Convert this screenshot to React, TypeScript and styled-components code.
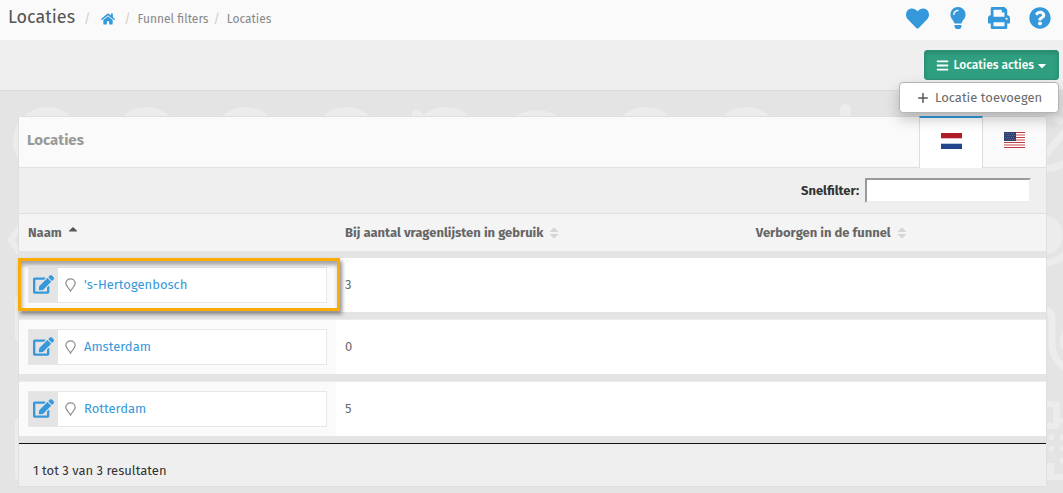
import React from "react";
import styled, { createGlobalStyle, css } from "styled-components";
import {
  FaBars,
  FaCaretDown,
  FaEdit,
  FaHeart,
  FaHome,
  FaLightbulb,
  FaPrint,
  FaQuestionCircle,
} from "react-icons/fa";

const blue = "#3498db";

const GlobalStyle = createGlobalStyle`
  * { box-sizing: border-box; }
  body {
    margin: 0;
    background: #e4e4e4;
    color: #676a6c;
    font: 13px/20px "Fira Sans", Roboto, "Noto Sans", sans-serif;
  }
  button, input { font: inherit; }
  a { color: ${blue}; text-decoration: none; }
  svg { display: block; flex: none; }
`;

const Page = styled.div`
  position: relative;
  min-height: 100vh;
  overflow: hidden;
`;

const Backdrop = styled.svg`
  position: absolute;
  top: 91px;
  left: 0;
  z-index: -1;
`;

const Header = styled.header`
  display: flex;
  align-items: center;
  justify-content: space-between;
  height: 40px;
  padding: 0 12px 4px 8px;
  background: #fafafa;
`;

const Trail = styled.nav`
  display: flex;
  align-items: center;
`;

const Title = styled.h1`
  margin: 0 4px 2px 0;
  font-size: 18px;
  font-weight: 400;
  line-height: 24px;
  color: #555;
`;

const Crumbs = styled.ol`
  display: flex;
  align-items: center;
  margin: 0;
  padding: 2px 0 0;
  list-style: none;
  font-size: 12px;
`;

const Crumb = styled.li`
  display: flex;
  align-items: center;
  &::before {
    content: "/";
    padding: 0 7px 0 5px;
    color: #ccc;
  }
`;

const CrumbLink = styled.a`
  color: #888;
`;

const HomeLink = styled.a`
  padding: 0 4px;
`;

const Tools = styled.div`
  display: flex;
  align-items: center;
  gap: 19px;
`;

const ToolButton = styled.button`
  display: flex;
  justify-content: center;
  width: 22px;
  padding: 0;
  border: 0;
  background: none;
  color: ${blue};
  cursor: pointer;
`;

const Toolbar = styled.div`
  display: flex;
  justify-content: flex-end;
  padding: 10px 4px;
  border-bottom: 1px solid #dcdcdc;
  background: #efefef;
`;

const Dropdown = styled.div`
  position: relative;
`;

const ActionButton = styled.button`
  display: flex;
  align-items: center;
  gap: 4px;
  height: 30px;
  padding: 0 12px 0 11px;
  border: 1px solid #2b9278;
  border-radius: 3px;
  background: #2f9f80;
  box-shadow: inset 0 2px 4px rgba(0, 0, 0, 0.15);
  color: #fff;
  font-size: 12px;
  font-weight: 500;
  white-space: nowrap;
  cursor: pointer;
  & > svg:last-child {
    width: 8px;
    height: 13px;
  }
`;

const Menu = styled.ul`
  position: absolute;
  top: 32px;
  right: 0;
  z-index: 2;
  width: 160px;
  margin: 0;
  padding: 0;
  border: 1px solid #b4b4b4;
  border-radius: 4px;
  background: #fff;
  box-shadow: 0 6px 14px rgba(0, 0, 0, 0.22);
  list-style: none;
`;

const MenuLink = styled.a`
  display: flex;
  align-items: center;
  gap: 7px;
  height: 29px;
  padding-left: 18px;
  color: #6a6a6a;
  white-space: nowrap;
`;

const Panel = styled.main`
  margin: 25px 16px 7px 18px;
  border: 1px solid #dfdfdf;
  border-radius: 3px 3px 0 0;
  background: #efefef;
`;

const PanelHead = styled.div`
  display: flex;
  justify-content: space-between;
  height: 51px;
  border-bottom: 1px solid #e0e0e0;
  background: #fafafa;
`;

const PanelTitle = styled.h2`
  margin: 0;
  padding: 13px 8px;
  font-size: 15px;
  font-weight: 700;
  line-height: 20px;
  color: #999;
`;

const Tabs = styled.div`
  display: flex;
  margin-top: -1px;
`;

const Tab = styled.button<{ $active?: boolean }>`
  display: flex;
  align-items: center;
  justify-content: center;
  width: ${(p) => (p.$active ? "64px" : "63px")};
  height: 52px;
  padding: 0 0 4px;
  border: 0;
  background: none;
  cursor: pointer;
  ${(p) =>
    p.$active &&
    css`
      border: 1px solid #ddd;
      border-width: 2px 1px 0;
      border-top-color: ${blue};
      background: #fff;
    `}
`;

const FilterBar = styled.div`
  display: flex;
  align-items: center;
  justify-content: flex-end;
  gap: 6px;
  height: 46px;
  padding-right: 15px;
  border-bottom: 1px solid #dfdfdf;
`;

const FilterLabel = styled.label`
  font-weight: 700;
  color: #333;
`;

const FilterInput = styled.input`
  width: 166px;
  height: 25px;
  padding: 1px 4px;
  border: 2px solid;
  border-color: #9a9a9a #eee #eee #9a9a9a;
  background: #fff;
`;

const Table = styled.table`
  width: 100%;
  table-layout: fixed;
  border-spacing: 0;
`;

const Th = styled.th<{ $width?: string }>`
  width: ${(p) => p.$width ?? "auto"};
  height: 44px;
  padding: 0 9px;
  border-bottom: 7px solid #e4e4e4;
  background: #f4f4f4;
  color: #666;
  font-weight: 700;
  text-align: left;
`;

const SortButton = styled.button`
  display: flex;
  align-items: center;
  gap: 7px;
  padding: 0;
  border: 0;
  background: none;
  color: inherit;
  white-space: nowrap;
  cursor: pointer;
`;

const Row = styled.tr`
  &:not(:first-child) > td {
    border-top: 1px solid #ececec;
  }
`;

const Td = styled.td`
  padding: 9px;
  border-bottom: 7px solid #e4e4e4;
  background: #fff;
`;

const NameTd = styled(Td)<{ $marked?: boolean }>`
  position: relative;
  background: #fafafa;
  ${(p) =>
    p.$marked &&
    css`
      &::after {
        content: "";
        position: absolute;
        inset: 0 -4px 1px -1px;
        z-index: 1;
        border: 3px solid #f9ab06;
        box-shadow: 2px 3px 4px rgba(0, 0, 0, 0.45),
          inset 1px 4px 4px rgba(0, 0, 0, 0.35);
        pointer-events: none;
      }
    `}
`;

const NameBox = styled.div`
  display: flex;
  align-items: center;
  height: 36px;
  border: 1px solid #e7e7e7;
  background: #fff;
`;

const EditLink = styled.a`
  display: flex;
  align-items: center;
  justify-content: center;
  align-self: stretch;
  width: 29px;
  margin-right: 7px;
  padding: 0 1px 2px 0;
  background: #e4e4e4;
`;

const NameLink = styled.a`
  margin-left: 8px;
`;

const Summary = styled.footer`
  height: 43px;
  padding: 17px 14px 0;
  border-top: 1px solid #111;
  color: #333;
`;

const PinIcon = () => (
  <svg width="11" height="14" viewBox="0 0 11 14" fill="none" stroke="#8c8c8c" strokeWidth="1.2" aria-hidden>
    <path d="M5.5 13.1C4.4 11 .8 7.600 .8 5.300a4.700 4.500 0 0 1 9.400 0c0 2.300-3.600 5.700-4.700 7.800z" />
  </svg>
);

const PlusIcon = () => (
  <svg width="10" height="10" viewBox="0 0 10 10" stroke="#555" strokeWidth="1.500" strokeLinecap="round" aria-hidden>
    <path d="M5 .7v8.600M.7 5h8.600" />
  </svg>
);

const SortIcon = ({ active }: { active?: boolean }) =>
  active ? (
    <svg width="8" height="12" viewBox="0 0 8 12" fill="#555" aria-hidden>
      <path d="M4 0 8 3.800v.7H0v-.7z" />
    </svg>
  ) : (
    <svg width="8" height="12" viewBox="0 0 8 12" fill="#d5d5d5" aria-hidden>
      <path d="M4 .5 8 4.300V5H0v-.7zM4 11.500 8 7.700V7H0v.7z" />
    </svg>
  );

const DutchFlag = () => (
  <svg width="21" height="16" viewBox="0 0 21 16" aria-hidden>
    <path fill="#fff" d="M0 0h21v16H0z" />
    <path fill="#ae1c28" d="M0 0h21v5H0z" />
    <path fill="#ebbabe" d="M0 5h21v1H0z" />
    <path fill="#bccadd" d="M0 10h21v1H0z" />
    <path fill="#21468b" d="M0 11h21v5H0z" />
  </svg>
);

const AmericanFlag = () => (
  <svg width="21" height="16" viewBox="0 0 21 16" aria-hidden>
    <path fill="#fff" d="M0 0h21v16H0z" />
    <path stroke="#bd3d44" d="M0 .5h21M0 5.500h21M0 10.500h21M0 15.500h21" />
    <path stroke="#e4a4a8" d="M0 3h21M0 8h21M0 13h21" strokeWidth="2" />
    <path fill="#2f3f70" d="M0 0h12v9H0z" />
    <path stroke="#606c91" strokeDasharray="1 1" d="M1 1.500h10M2 3.500h9M1 5.500h10M2 7.500h9" />
  </svg>
);

const BackdropArt = () => (
  <Backdrop width="1063" height="402" viewBox="0 91 1063 402" fill="#ececec" stroke="none" aria-hidden>
    {[47, 146, 246, 346, 446, 646, 746].map((x) => (
      <circle key={x} cx={x} cy="141" r="34" />
    ))}
    <circle cx="537" cy="149" r="39" />
    <path d="M412 117v-5q2-5 7-1l7 7z" />
    <rect x="840" y="104" width="11" height="30" rx="5" />
    <g fill="none" stroke="#ececec" strokeWidth="7" strokeLinecap="round">
      <path d="M19 228 11 240 19 252" strokeWidth="6" />
      <path d="M19 300v38M19 422v54" strokeWidth="8" />
      <path d="M1040 161 1066 131M1040 168q15 2 28-7M1040 121q12-6 20 0" />
      <path d="M1040 264q16-1 28-11M1040 311q12-3 12 8v26q1 16 16 25" />
    </g>
    <circle cx="1043" cy="235" r="20" />
    <circle cx="1046" cy="224" r="8" />
    <path d="M1063 330v20q-5-4-3-12zM1047 401h9q4 0 4 4v13h3v5h-3v2q0 4-4 4h-9v-6h6v-16h-6z" />
    <path d="M1049 435h5v5h-5zM1060 435h3v5h-3zM1049 446h5v5h-5zM1060 446h3v5h-3zM1060 458h3v5h-3zM1047 463h7v11h9v6h-16z" />
  </Backdrop>
);

const locations = [
  { name: "'s-Hertogenbosch", used: 3, marked: true },
  { name: "Amsterdam", used: 0 },
  { name: "Rotterdam", used: 5 },
];

export default function App() {
  return (
    <Page>
      <GlobalStyle />
      <BackdropArt />
      <Header>
        <Trail aria-label="Kruimelpad">
          <Title>Locaties</Title>
          <Crumbs>
            <Crumb>
              <HomeLink href="#home" aria-label="Home"><FaHome size={14} /></HomeLink>
            </Crumb>
            <Crumb><CrumbLink href="#filters">Funnel filters</CrumbLink></Crumb>
            <Crumb><CrumbLink href="#locaties">Locaties</CrumbLink></Crumb>
          </Crumbs>
        </Trail>
        <Tools>
          <ToolButton aria-label="Favoriet"><FaHeart size={23} /></ToolButton>
          <ToolButton aria-label="Tips"><FaLightbulb size={22} /></ToolButton>
          <ToolButton aria-label="Afdrukken"><FaPrint size={22} /></ToolButton>
          <ToolButton aria-label="Help"><FaQuestionCircle size={22} /></ToolButton>
        </Tools>
      </Header>

      <Toolbar>
        <Dropdown>
          <ActionButton aria-expanded="true">
            <FaBars size={13} />
            Locaties acties
            <FaCaretDown />
          </ActionButton>
          <Menu>
            <li><MenuLink href="#toevoegen"><PlusIcon />Locatie toevoegen</MenuLink></li>
          </Menu>
        </Dropdown>
      </Toolbar>

      <Panel>
        <PanelHead>
          <PanelTitle>Locaties</PanelTitle>
          <Tabs>
            <Tab $active aria-label="Nederlands"><DutchFlag /></Tab>
            <Tab aria-label="Engels"><AmericanFlag /></Tab>
          </Tabs>
        </PanelHead>
        <FilterBar>
          <FilterLabel htmlFor="snelfilter">Snelfilter:</FilterLabel>
          <FilterInput id="snelfilter" type="text" />
        </FilterBar>
        <Table>
          <thead>
            <tr>
              <Th $width="317px"><SortButton>Naam <SortIcon active /></SortButton></Th>
              <Th $width="40%"><SortButton>Bij aantal vragenlijsten in gebruik <SortIcon /></SortButton></Th>
              <Th><SortButton>Verborgen in de funnel <SortIcon /></SortButton></Th>
            </tr>
          </thead>
          <tbody>
            {locations.map((l) => (
              <Row key={l.name}>
                <NameTd $marked={l.marked}>
                  <NameBox>
                    <EditLink href="#bewerk" aria-label={`Bewerk ${l.name}`}><FaEdit size={21} /></EditLink>
                    <PinIcon />
                    <NameLink href="#locatie">{l.name}</NameLink>
                  </NameBox>
                </NameTd>
                <Td>{l.used}</Td>
                <Td />
              </Row>
            ))}
          </tbody>
        </Table>
        <Summary>1 tot 3 van 3 resultaten</Summary>
      </Panel>
    </Page>
  );
}
